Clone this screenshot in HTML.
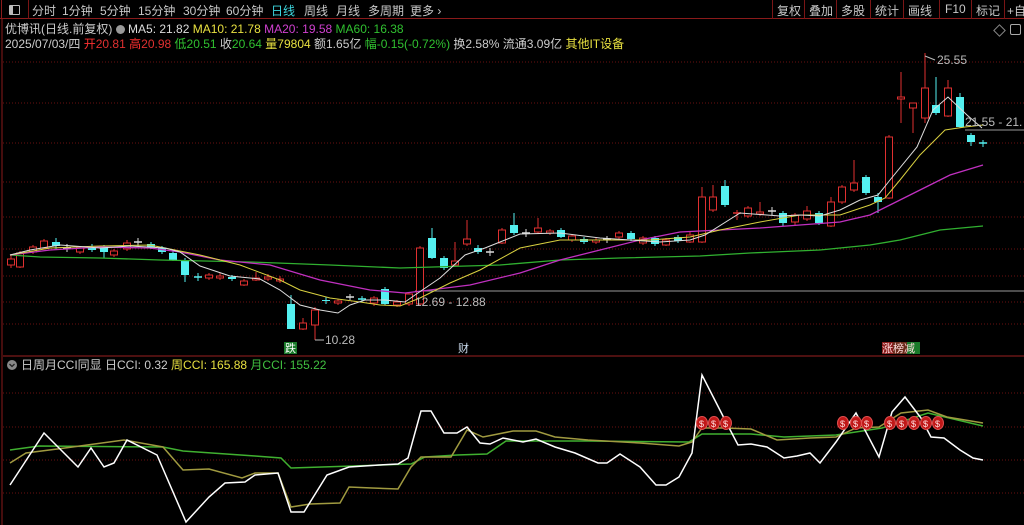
<!DOCTYPE html>
<html><head><meta charset="utf-8">
<style>
html,body{margin:0;padding:0;background:#000;width:1024px;height:525px;overflow:hidden;font-family:"Liberation Sans","Noto Sans CJK SC",sans-serif;}
.tb{position:absolute;left:0;top:0;width:1024px;height:19px;border-bottom:1px solid #8a1a1a;box-sizing:border-box;font-size:12px;color:#c8c8c8;}
.tb span{position:absolute;top:2px;white-space:nowrap}
.sep{position:absolute;top:0;width:1px;height:19px;background:#7a1515}
.t{position:absolute;white-space:nowrap;font-size:12px;}
</style></head><body>
<div class="tb">
<div style="position:absolute;left:1px;top:0;width:1px;height:19px;background:#8a1a1a"></div>
<div style="position:absolute;left:9px;top:5px;width:9px;height:8px;border:1px solid #bbb;border-radius:1px;"><div style="width:3px;height:8px;background:#bbb"></div></div>
<div class="sep" style="left:28px"></div>
<span style="left:32px">分时</span><span style="left:62px">1分钟</span><span style="left:100px">5分钟</span><span style="left:138px">15分钟</span><span style="left:183px">30分钟</span><span style="left:226px">60分钟</span><span style="left:271px;color:#3ed8e0">日线</span><span style="left:304px">周线</span><span style="left:336px">月线</span><span style="left:368px">多周期</span><span style="left:410px">更多 ›</span>
<div class="sep" style="left:772px"></div><span style="left:777px">复权</span>
<div class="sep" style="left:804px"></div><span style="left:809px">叠加</span>
<div class="sep" style="left:836px"></div><span style="left:841px">多股</span>
<div class="sep" style="left:870px"></div><span style="left:875px">统计</span>
<div class="sep" style="left:903px"></div><span style="left:908px">画线</span>
<div class="sep" style="left:939px"></div><span style="left:945px">F10</span>
<div class="sep" style="left:971px"></div><span style="left:976px">标记</span>
<div class="sep" style="left:1004px"></div><span style="left:1007px">+自</span>
</div>
<div class="t" style="left:5px;top:20px;color:#ccc">优博讯(日线.前复权) <span style="display:inline-block;width:9px;height:9px;border-radius:50%;background:#999;vertical-align:-1px"></span> <span style="color:#ddd">MA5: 21.82</span> <span style="color:#e8e040">MA10: 21.78</span> <span style="color:#d040d0">MA20: 19.58</span> <span style="color:#30c030">MA60: 16.38</span></div>
<div class="t" style="left:5px;top:35px;color:#ccc">2025/07/03/四 <span style="color:#ff3030">开</span><span style="color:#e03030">20.81</span> <span style="color:#ff3030">高</span><span style="color:#e03030">20.98</span> <span style="color:#30c030">低20.51</span> <span style="color:#ccc">收</span><span style="color:#30c030">20.64</span> <span style="color:#e8e040">量</span><span style="color:#e8e040">79804</span> 额1.65亿 <span style="color:#30c030">幅-0.15(-0.72%)</span> 换2.58% 流通3.09亿 <span style="color:#e8e040">其他IT设备</span></div>
<div style="position:absolute;left:995px;top:26px;width:7px;height:7px;border:1px solid #888;transform:rotate(45deg)"></div>
<div style="position:absolute;left:1010px;top:24px;width:9px;height:9px;border:1px solid #aaa;border-radius:2px"></div>

<svg id="s" width="1024" height="525" style="position:absolute;left:0;top:0" xmlns="http://www.w3.org/2000/svg">
<line x1="2" y1="19" x2="2" y2="525" stroke="#8a1a1a"/>
<g stroke="#6a1010" stroke-dasharray="1,2">
<line x1="3" x2="1024" y1="62" y2="62"/><line x1="3" x2="1024" y1="103" y2="103"/><line x1="3" x2="1024" y1="143" y2="143"/><line x1="3" x2="1024" y1="182" y2="182"/><line x1="3" x2="1024" y1="217" y2="217"/><line x1="3" x2="1024" y1="249" y2="249"/><line x1="3" x2="1024" y1="276" y2="276"/><line x1="3" x2="1024" y1="302" y2="302"/><line x1="3" x2="1024" y1="324" y2="324"/>
<line x1="3" x2="1024" y1="393" y2="393"/><line x1="3" x2="1024" y1="427" y2="427"/><line x1="3" x2="1024" y1="460" y2="460"/><line x1="3" x2="1024" y1="493" y2="493"/>
</g>
<line x1="3" x2="1024" y1="356" y2="356" stroke="#9a2020"/>
<line x1="415" x2="1024" y1="291" y2="291" stroke="#999"/>
<line x1="965" x2="1024" y1="130" y2="130" stroke="#999"/>
<g id="c"></g>
<polyline fill="none" stroke="#30b030" stroke-width="1.3" points="10,255 40,257 100,258 160,260 250,262 330,265 400,268 500,265 560,260 620,258 700,256 750,253 820,250 870,245 900,240 940,230 983,226"/>
<polyline fill="none" stroke="#c030c0" stroke-width="1.3" points="10,255 50,250 100,247 150,248 180,252 220,260 270,265 320,280 370,290 405,293 430,290 470,285 520,273 560,260 600,250 640,240 680,232 720,230 760,228 800,225 840,222 870,215 890,205 920,190 950,175 983,165"/>
<polyline fill="none" stroke="#d8d040" stroke-width="1" points="10,255 50,248 100,246 150,245 175,250 200,255 240,265 280,280 300,290 330,298 360,302 380,305 400,306 420,298 450,283 480,270 520,248 560,240 600,240 650,240 690,237 720,230 760,222 800,215 840,215 870,205 885,198 900,180 920,155 945,130 965,127 983,125"/>
<polyline fill="none" stroke="#ddd" stroke-width="1" points="10,255 30,250 60,245 100,248 130,246 165,248 180,252 200,266 230,276 260,279 280,290 300,305 320,310 338,313 350,305 365,300 385,300 405,302 415,295 440,278 465,255 485,248 500,242 520,234 560,233 600,238 660,242 690,240 705,235 740,213 780,216 800,215 820,216 840,210 860,200 878,195 890,180 917,147 933,110 948,97 967,115 982,128"/>
<g font-size="12" fill="#bbb" font-family="Liberation Sans,sans-serif">
<text x="937" y="64">25.55</text><path d="M925 56 L935 60" stroke="#bbb"/>
<text x="965" y="126">21.55 - 21.</text>
<text x="415" y="306">12.69 - 12.88</text>
<text x="325" y="344">10.28</text><path d="M315 340 L324 340" stroke="#bbb"/>
</g>
<rect x="284" y="342" width="13" height="12" fill="#1a7a2a"/><text x="285" y="352" font-size="11" fill="#fff" font-family="Noto Sans CJK SC,sans-serif">跌</text>
<text x="458" y="352" font-size="11" fill="#cde" font-family="Noto Sans CJK SC,sans-serif">财</text>
<rect x="882" y="342" width="11" height="12" fill="#8a1a1a"/><rect x="893" y="342" width="14" height="12" fill="#6a2a1a"/><rect x="907" y="342" width="13" height="12" fill="#1a7a2a"/>
<text x="882" y="352" font-size="11" fill="#fdd" font-family="Noto Sans CJK SC,sans-serif">涨榜减</text>
<circle cx="12" cy="365" r="5" fill="#888"/><path d="M9.5 364 L12 366.5 L14.5 364" stroke="#222" fill="none" stroke-width="1.3"/>
<text x="21" y="369" font-size="12" fill="#ccc" font-family="Liberation Sans,Noto Sans CJK SC,sans-serif">日周月CCI同显 日CCI: 0.32 <tspan fill="#e8e040">周CCI: 165.88</tspan> <tspan fill="#40c040">月CCI: 155.22</tspan></text>
<polyline fill="none" stroke="#40b030" stroke-width="1.5" points="10,450 39,446 163,447 183,451 255,456 281,458 291,468 353,466 411,464 425,457 457,455 487,454 506,441 588,441 689,442 702,434 751,434 784,437 836,435 882,428 928,413 983,426"/>
<polyline fill="none" stroke="#a09a40" stroke-width="1.5" points="10,463 26,453 65,448 124,440 163,447 183,470 209,469 242,478 255,473 278,473 291,507 310,504 340,503 349,487 372,488 398,489 411,467 421,457 451,457 467,430 483,437 513,431 536,431 555,437 588,440 640,443 679,446 692,442 702,428 725,428 751,429 777,440 810,438 836,437 856,428 879,427 901,413 928,410 947,417 983,423"/>
<polyline fill="none" stroke="#fff" stroke-width="1.5" points="10,485 44,433 78,467 91,448 104,467 114,463 127,440 157,455 186,522 209,497 225,483 245,482 255,475 278,473 291,512 304,512 327,475 349,467 379,465 398,464 408,458 421,411 431,411 444,433 457,433 467,427 480,443 490,444 503,438 523,442 536,439 555,447 575,453 598,463 607,463 620,454 640,467 656,485 666,485 679,477 692,453 702,375 725,420 738,445 751,444 767,447 784,458 797,456 810,453 820,463 836,442 856,413 879,457 892,412 905,397 921,418 931,437 944,438 960,450 973,458 983,460"/>
<g id="m"></g>
</svg>
<script>
var R="#e03030",C="#54f0f0";
var d=[[11,259,265,255,268,'r'],[20,253,267,251,268,'r'],[33,247,252,245,254,'r'],[44,241,248,239,249,'r'],[56,242,246,238,250,'c'],[67,248,248,244,252,'w'],[80,248,252,246,254,'r'],[92,247,250,244,252,'c'],[104,247,252,245,258,'c'],[114,251,255,249,257,'r'],[127,243,249,240,251,'r'],[138,242,242,238,246,'w'],[151,244,247,242,249,'c'],[162,248,252,246,254,'c'],[173,253,260,251,261,'c'],[185,260,275,258,282,'c'],[198,277,277,273,281,'c'],[209,275,278,273,280,'r'],[220,276,278,273,280,'r'],[232,277,279,275,281,'c'],[244,281,285,279,286,'r'],[256,278,280,272,281,'r'],[268,277,279,274,281,'r'],[280,279,281,276,283,'r'],[291,304,329,295,329,'c'],[303,323,329,318,330,'r'],[315,310,325,307,340,'r'],[326,300,301,297,304,'c'],[338,301,303,299,305,'r'],[350,297,297,294,300,'w'],[362,299,299,296,302,'c'],[374,298,303,296,306,'r'],[385,289,304,287,305,'c'],[397,302,305,300,307,'r'],[409,294,304,292,306,'r'],[420,248,304,246,305,'r'],[432,238,258,228,259,'c'],[444,258,268,256,270,'c'],[455,261,265,242,266,'r'],[467,239,244,220,246,'r'],[478,248,252,245,254,'c'],[490,252,252,248,256,'w'],
[502,230,243,228,244,'r'],[514,225,233,213,235,'c'],[526,233,233,229,237,'w'],[538,228,232,218,234,'r'],[550,231,233,229,235,'r'],[561,230,237,228,238,'c'],[572,236,240,234,242,'r'],[584,239,242,237,244,'c'],[596,240,242,238,244,'r'],[607,239,239,236,243,'w'],[619,233,237,231,239,'r'],[631,233,239,231,241,'c'],[643,238,243,236,245,'r'],[655,238,244,236,246,'c'],[666,240,245,238,246,'r'],[678,237,241,235,243,'c'],[690,235,242,232,243,'r'],[702,197,242,187,243,'r'],[713,197,210,185,212,'r'],[725,186,205,180,207,'c'],[737,213,213,210,220,'r'],[748,208,216,206,218,'r'],[760,212,214,202,216,'r'],[772,211,211,207,215,'w'],[783,213,223,211,226,'c'],[795,215,222,213,225,'r'],[807,211,219,206,221,'r'],[819,213,223,211,225,'c'],[831,202,226,197,227,'r'],[842,187,202,185,204,'r'],[854,183,190,160,192,'r'],[866,177,193,175,195,'c'],[878,197,202,193,213,'c'],[889,137,198,135,199,'r'],[901,97,99,72,123,'r'],[913,103,108,103,133,'r'],[925,88,118,53,123,'r'],[936,105,113,77,115,'c'],[948,88,116,80,117,'r'],[960,97,127,93,128,'c'],[971,135,142,133,146,'c'],[983,143,143,140,147,'c']];
var h="";
d.forEach(function(a){var x=a[0],t=a[1],b=a[2],col=a[5]=='r'?R:(a[5]=='c'?C:'#ddd');
h+='<line x1="'+x+'" x2="'+x+'" y1="'+a[3]+'" y2="'+a[4]+'" stroke="'+col+'"/>';
if(b-t<1){h+='<line x1="'+(x-4)+'" x2="'+(x+4)+'" y1="'+t+'" y2="'+t+'" stroke="'+col+'" stroke-width="1.5"/>';}
else if(a[5]=='r'){h+='<rect x="'+(x-3.5)+'" y="'+t+'" width="7" height="'+(b-t)+'" fill="#000" stroke="'+R+'"/>';}
else{h+='<rect x="'+(x-4)+'" y="'+t+'" width="8" height="'+(b-t)+'" fill="'+col+'"/>';}});
document.getElementById('c').innerHTML=h;
var m="";[702,714,726,843,856,867,890,902,914,926,938].forEach(function(x){m+='<ellipse cx="'+x+'" cy="423" rx="5.5" ry="6.5" fill="#c01818" stroke="#e05050"/><text x="'+(x-3)+'" y="427" font-size="9" fill="#fdd" font-family="Liberation Sans,sans-serif">$</text>';});
document.getElementById('m').innerHTML=m;
</script>
</body></html>
